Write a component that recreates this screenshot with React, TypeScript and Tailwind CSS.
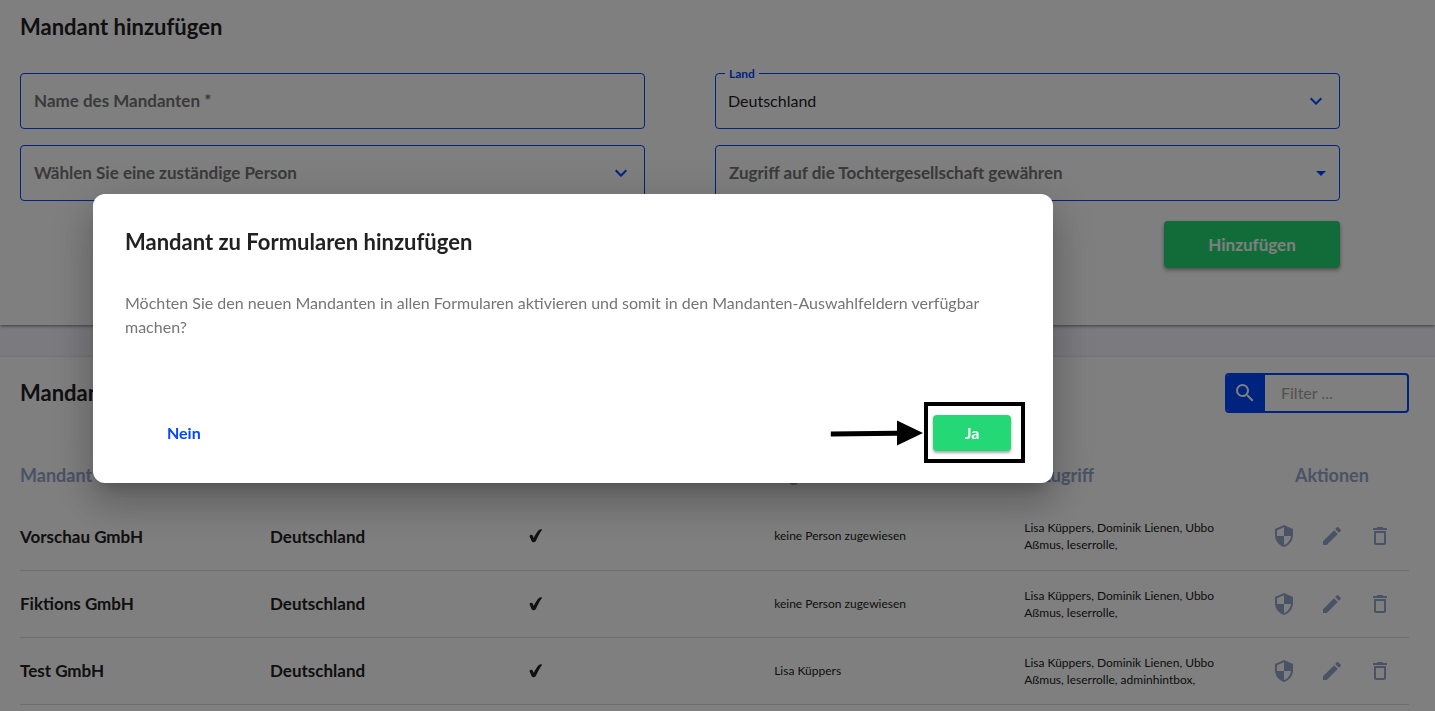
import { type ReactNode } from "react";
import { MdDeleteOutline, MdEdit, MdExpandMore, MdArrowDropDown, MdSearch, MdSecurity } from "react-icons/md";

interface Client {
  name: string;
  country: string;
  person: string;
  access: string;
}

const CLIENTS: Client[] = [
  {
    name: "Vorschau GmbH",
    country: "Deutschland",
    person: "keine Person zugewiesen",
    access: "Lisa Küppers, Dominik Lienen, Ubbo Aßmus, leserrolle,",
  },
  {
    name: "Fiktions GmbH",
    country: "Deutschland",
    person: "keine Person zugewiesen",
    access: "Lisa Küppers, Dominik Lienen, Ubbo Aßmus, leserrolle,",
  },
  {
    name: "Test GmbH",
    country: "Deutschland",
    person: "Lisa Küppers",
    access: "Lisa Küppers, Dominik Lienen, Ubbo Aßmus, leserrolle, adminhintbox,",
  },
];

const LABEL_CLASS = "pointer-events-none absolute left-3.5 top-4 text-[17px] leading-6 font-bold text-[#757575]";
const CONTROL_CLASS = "h-14 w-full appearance-none rounded border border-[#0047ff] bg-transparent px-3 text-base text-[#212121] outline-none";

function SelectField({
  id,
  label,
  value,
  icon,
}: {
  id: string;
  label: string;
  value?: string;
  icon: ReactNode;
}) {
  return (
    <div className="relative">
      <select id={id} className={CONTROL_CLASS} defaultValue={value ?? ""}>
        <option value={value ?? ""}>{value ?? ""}</option>
      </select>
      <label
        htmlFor={id}
        className={value ? "absolute -top-[7px] left-2.5 bg-white px-1 text-xs leading-4 font-bold text-[#0047ff]" : LABEL_CLASS}
      >
        {label}
      </label>
      {icon}
    </div>
  );
}

function CheckMark() {
  return (
    <svg width="16" height="16" viewBox="0 0 16 16" role="img" aria-label="aktiv">
      <path
        d="M1.500 8.200C1.600 6.500 4.100 6.200 4.700 7.600L5.700 10.100C7.300 6.600 9 3.800 10.900 2C11.900 1.100 14.300 1 14 2C11.700 4.800 9.800 8.700 8.100 12.600C7.300 14.500 4.400 14.700 3.600 12.900Z"
        fill="#212121"
      />
    </svg>
  );
}

function ClientForm() {
  return (
    <section className="bg-white px-5 pt-3 pb-[57px] shadow-[0_1px_3px_rgba(0,0,0,0.5)]">
      <h2 className="text-[22px] leading-[30px] font-bold text-[#212121]">Mandant hinzufügen</h2>
      <form className="mt-[31px] mr-[75px]" onSubmit={(e) => e.preventDefault()}>
        <div className="grid grid-cols-2 gap-x-[70px] gap-y-4">
          <div className="relative">
            <input id="name" type="text" className={CONTROL_CLASS} />
            <label htmlFor="name" className={LABEL_CLASS}>
              Name des Mandanten *
            </label>
          </div>
          <SelectField
            id="country"
            label="Land"
            value="Deutschland"
            icon={<MdExpandMore size={24} className="pointer-events-none absolute top-4 right-3 text-[#0047ff]" />}
          />
          <SelectField
            id="person"
            label="Wählen Sie eine zuständige Person"
            icon={<MdExpandMore size={24} className="pointer-events-none absolute top-4 right-3 text-[#0047ff]" />}
          />
          <SelectField
            id="access"
            label="Zugriff auf die Tochtergesellschaft gewähren"
            icon={<MdArrowDropDown size={24} className="pointer-events-none absolute top-4 right-[7px] text-[#0047ff]" />}
          />
        </div>
        <div className="mt-5 flex justify-end">
          <button
            type="submit"
            className="h-[47px] w-44 rounded bg-[#24d975] text-[17px] font-bold text-white shadow-[0_2px_4px_rgba(0,0,0,0.4)]"
          >
            Hinzufügen
          </button>
        </div>
      </form>
    </section>
  );
}

function ClientTable() {
  return (
    <section className="bg-white pt-4 pr-[26px] pb-10 pl-5 shadow-[0_1px_3px_rgba(0,0,0,0.3)]">
      <div className="flex items-center justify-between">
        <h2 className="text-[22px] leading-[30px] font-bold text-[#212121]">Mandanten</h2>
        <div className="flex h-10 w-[184px] overflow-hidden rounded border-2 border-[#0047ff]">
          <label
            htmlFor="filter"
            aria-label="Filter"
            className="flex w-[38px] shrink-0 items-center bg-[#0047ff] pl-1.5 text-white"
          >
            <MdSearch size={24} />
          </label>
          <input
            id="filter"
            type="text"
            placeholder="Filter ..."
            className="w-full min-w-0 px-4 text-base text-[#212121] outline-none placeholder:text-[#a3a3a3]"
          />
        </div>
      </div>
      <table className="mt-[34px] w-full table-fixed border-collapse text-left">
        <colgroup>
          <col className="w-[18%]" />
          <col className="w-[18%]" />
          <col className="w-[18.3%]" />
          <col className="w-[18%]" />
          <col className="w-[16.6%]" />
          <col className="w-[11.1%]" />
        </colgroup>
        <thead>
          <tr className="h-14 text-lg text-[#95a6cd]">
            <th>Mandant</th>
            <th>Land</th>
            <th>Aktiv</th>
            <th>Eigentümer</th>
            <th className="pl-4">Zugriff</th>
            <th className="text-center">Aktionen</th>
          </tr>
        </thead>
        <tbody>
          {CLIENTS.map((client) => (
            <tr key={client.name} className="h-[67px] border-b border-[#dadada] text-[#212121]">
              <td className="text-[17px] font-bold">{client.name}</td>
              <td className="text-[17px] font-bold">{client.country}</td>
              <td className="pl-2">
                <CheckMark />
              </td>
              <td className="text-xs">{client.person}</td>
              <td className="pr-8 text-xs leading-[17px]">{client.access}</td>
              <td>
                <div className="flex justify-center gap-6 text-[#95a6cd]">
                  <button type="button" aria-label="Rechte">
                    <MdSecurity size={24} />
                  </button>
                  <button type="button" aria-label="Bearbeiten">
                    <MdEdit size={24} />
                  </button>
                  <button type="button" aria-label="Löschen">
                    <MdDeleteOutline size={24} />
                  </button>
                </div>
              </td>
            </tr>
          ))}
        </tbody>
      </table>
    </section>
  );
}

function ConfirmDialog() {
  return (
    <div className="fixed inset-0 bg-black/50 pt-[194px] pl-[93px]">
      <div
        role="dialog"
        aria-modal="true"
        aria-labelledby="dialog-title"
        className="max-w-[960px] rounded-xl bg-white px-8 pt-8 pb-5 shadow-[0_11px_15px_-7px_rgba(0,0,0,0.2),0_24px_38px_3px_rgba(0,0,0,0.14),0_9px_46px_8px_rgba(0,0,0,0.12)]"
      >
        <h2 id="dialog-title" className="text-[22px] leading-8 font-bold text-[#212121]">
          Mandant zu Formularen hinzufügen
        </h2>
        <p className="mt-[33px] text-base leading-6 text-[#757575]">
          Möchten Sie den neuen Mandanten in allen Formularen aktivieren und somit in den Mandanten-Auswahlfeldern
          verfügbar machen?
        </p>
        <div className="mt-[63px] -mr-1 flex items-center justify-between pl-[42px]">
          <button type="button" className="text-base font-bold text-[#0047ff]">
            Nein
          </button>
          <div className="flex items-center">
            <svg width="94" height="28" viewBox="0 0 94 28">
              <path d="M.800 12.400 67 11.800V1.500L93 14 67 26.500V16.800L.800 17.500Z" fill="#000" />
            </svg>
            <div className="border-4 border-black p-[5px] pt-[9px] pb-2 pr-2.5">
              <button
                type="button"
                className="block h-9 w-[78px] rounded bg-[#24d975] text-base font-bold text-white shadow-[0_2px_3px_rgba(0,0,0,0.35)]"
              >
                Ja
              </button>
            </div>
          </div>
        </div>
      </div>
    </div>
  );
}

export default function App() {
  return (
    <div className="h-screen overflow-hidden bg-[#f5f4fe] font-['Lato',sans-serif]">
      <ClientForm />
      <div className="mt-8">
        <ClientTable />
      </div>
      <ConfirmDialog />
    </div>
  );
}
